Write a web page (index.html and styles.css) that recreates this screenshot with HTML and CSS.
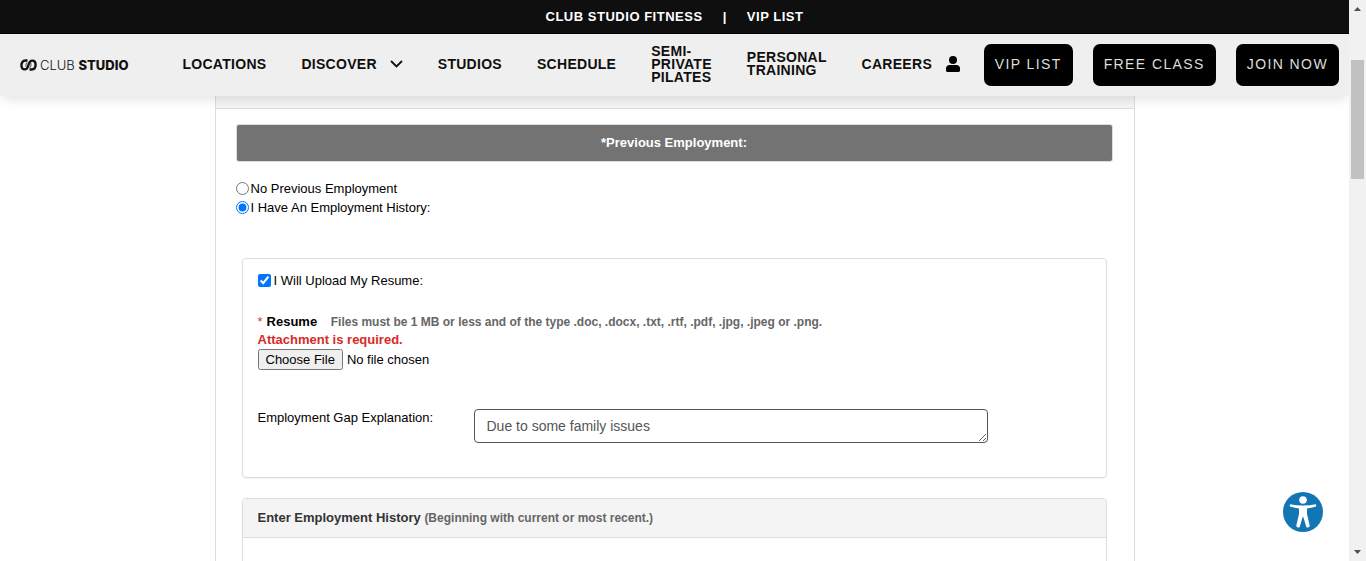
FILE: index.html
```html
<!DOCTYPE html>
<html lang="en">
<head>
<meta charset="utf-8">
<title>Club Studio - Careers</title>
<link rel="stylesheet" href="styles.css">
</head>
<body>
<div class="page">
  <div class="topbar">
    <a href="#">CLUB STUDIO FITNESS</a><span>|</span><a href="#">VIP LIST</a>
  </div>
  <header class="header">
    <a class="logo" href="#">
      <svg class="logo-mark" viewBox="0 0 34 24" fill="none" stroke="#111" stroke-width="4.800">
        <path d="M15 3H11C5.500 3 2.800 7.500 2.800 12.500C2.800 18 5.500 20.800 9.500 20.800C14 20.800 15.500 17.500 17 12S20 3.200 24.500 3.200C28.500 3.200 31.200 6 31.200 11.500C31.200 16.500 28.500 21 23 21H19"/>
        <path d="M12 15.500C11.500 12 12.500 8.500 14.500 6.500M22 8.500C22.500 12 21.500 15.500 19.500 17.500" stroke-width="1.600"/>
      </svg>
      <span class="logo-text">CLUB <b>STUDIO</b></span>
    </a>
    <nav class="nav">
      <a href="#">LOCATIONS</a>
      <a class="has-menu" href="#">DISCOVER
        <svg class="chevron" viewBox="0 0 13 8" fill="none" stroke="#111" stroke-width="1.800"><path d="M1 1L6.500 6.500L12 1"/></svg>
      </a>
      <a href="#">STUDIOS</a>
      <a href="#">SCHEDULE</a>
      <a class="stacked" href="#">SEMI-PRIVATE PILATES</a>
      <a class="stacked" href="#">PERSONAL TRAINING</a>
      <a href="#">CAREERS</a>
    </nav>
    <div class="actions">
      <a class="account" href="#" aria-label="Account">
        <svg viewBox="0 0 14 16" fill="#000"><circle cx="7" cy="4" r="4"/><path d="M3.600 9H10.400C12.600 9 14 10.500 14 12.500V14.600C14 15.500 13.500 16 12.600 16H1.400C.5 16 0 15.500 0 14.600V12.500C0 10.500 1.400 9 3.600 9Z"/></svg>
      </a>
      <a class="cta" href="#">VIP LIST</a>
      <a class="cta" href="#">FREE CLASS</a>
      <a class="cta" href="#">JOIN NOW</a>
    </div>
  </header>

  <main class="form-card">
    <div class="form-card-head"></div>
    <form class="form-body">
      <h2 class="band">*Previous Employment:</h2>
      <div class="choices">
        <label class="choice"><input type="radio" name="history">No Previous Employment</label>
        <label class="choice"><input type="radio" name="history" checked>I Have An Employment History:</label>
      </div>
      <section class="panel resume">
        <label class="choice upload"><input type="checkbox" checked>I Will Upload My Resume:</label>
        <div class="field-head">
          <span class="star">*</span><label class="field-name" for="resume">Resume</label>
          <span class="hint">Files must be 1 MB or less and of the type .doc, .docx, .txt, .rtf, .pdf, .jpg, .jpeg or .png.</span>
        </div>
        <div class="error">Attachment is required.</div>
        <input class="file" type="file" id="resume">
        <div class="gap-row">
          <label for="gap">Employment Gap Explanation:</label>
          <textarea id="gap" rows="1">Due to some family issues</textarea>
        </div>
      </section>
      <section class="panel history">
        <h3 class="panel-head">Enter Employment History <small>(Beginning with current or most recent.)</small></h3>
      </section>
    </form>
  </main>

  <button class="a11y" type="button" aria-label="Accessibility">
    <svg viewBox="0 0 40 40"><circle cx="20" cy="20" r="20" fill="#1276b5"/><circle cx="20" cy="8" r="3.800" fill="#fff"/>
      <path fill="#fff" d="M7.500 12.200Q13 13.600 20 13.600T32.500 12.200Q33.800 12.800 33 14.500Q28 16 24 16.500V22L26.800 34Q26 36 23.400 35.200L20.300 25H19.700L16.600 35.200Q14 36 13.200 34L16 22V16.500Q12 16 7 14.500Q6.200 12.800 7.500 12.200Z"/></svg>
  </button>
</div>
<div class="scrollbar" aria-hidden="true">
  <svg class="arrow" viewBox="0 0 7 4" fill="#505050"><path d="M0 4L3.500 0L7 4Z"/></svg>
  <div class="track"><div class="thumb"></div></div>
  <svg class="arrow" viewBox="0 0 7 4" fill="#505050"><path d="M0 0L3.500 4L7 0Z"/></svg>
</div>
</body>
</html>
```
FILE: styles.css
```css
* { box-sizing: border-box; }

body {
  margin: 0;
  display: flex;
  height: 100vh;
  overflow: hidden;
  background: #fff;
  color: #000;
  font: 13px/18px "Liberation Sans", Arial, sans-serif;
}

a { color: inherit; text-decoration: none; }

.page {
  flex: 1;
  min-width: 0;
  position: relative;
  overflow: hidden;
}

.topbar {
  display: flex;
  justify-content: center;
  gap: 20px;
  height: 34px;
  align-items: center;
  background: #0f0f0f;
  border-bottom: 1px solid #000;
  color: #fff;
  font-size: 13px;
  font-weight: 700;
  letter-spacing: 0.04em;
}

.header {
  position: relative;
  z-index: 1;
  display: flex;
  align-items: center;
  height: 62px;
  padding: 0 10px 0 20px;
  background: #efefef;
  box-shadow: 0 6px 10px -2px rgba(0, 0, 0, 0.1);
}

.logo {
  display: flex;
  align-items: center;
  gap: 3px;
  margin-right: 54px;
  color: #111;
}
.logo-mark { width: 17px; height: 12px; }
.logo-text {
  font-family: Inter, sans-serif;
  font-size: 13px;
  font-weight: 300;
  white-space: nowrap;
}
.logo-text b { font-weight: 800; }

.nav {
  display: flex;
  align-items: center;
  gap: 35px;
  padding-bottom: 2px;
  color: #0f0f0f;
  font-size: 14px;
  font-weight: 700;
  line-height: 13px;
  letter-spacing: 0.02em;
}
.has-menu { display: flex; align-items: center; gap: 13px; }
.chevron { width: 13px; height: 8px; }
.stacked { width: min-content; }

.actions {
  display: flex;
  align-items: center;
  gap: 20px;
  margin-left: auto;
}
.account { margin-right: 4px; padding-bottom: 3px; }
.account svg { display: block; width: 14px; height: 16px; }
.cta {
  padding: 10px 11px 12px;
  border-radius: 7px;
  background: #000;
  color: #ddd;
  font-size: 14px;
  font-weight: 400;
  line-height: 20px;
  letter-spacing: 0.1em;
  white-space: nowrap;
}

.form-card {
  max-width: 920px;
  margin: 0 auto;
  border: 1px solid #ddd;
  border-top: 0;
}
.form-card-head {
  height: 13px;
  background: #f4f4f4;
  border-bottom: 1px solid #ddd;
}
.form-body { padding: 15px 21px 0 20px; }

.band {
  margin: 0;
  padding: 9px;
  border: 1px solid #ddd;
  border-radius: 3px;
  background: #737373;
  color: #fff;
  font-size: 13px;
  line-height: 18px;
  text-align: center;
}

.choices { margin: 17px 0 41px; }
.choice { display: flex; align-items: center; line-height: 19px; }
.choice input { margin: 0 2px 0 0; width: 13px; height: 13px; }
.choice.upload input { margin-right: 3px; }

.panel {
  margin: 0 6px 20px;
  border: 1px solid #ddd;
  border-radius: 4px;
  box-shadow: 0 1px 1px rgba(0, 0, 0, 0.05);
}
.resume { padding: 12px 15px 34px; }

.field-head { margin-top: 23px; font-weight: 700; }
.star { margin-right: 4px; color: #dc3545; font-weight: 400; }
.hint { margin-left: 10px; color: #666; font-size: 12px; }
.error { color: #d62b26; font-weight: 700; }
.file { display: block; font: inherit; height: 21px; }

.gap-row {
  display: grid;
  grid-template-columns: 216px minmax(0, 514px);
  margin-top: 39px;
}
textarea {
  height: 34px;
  padding: 6px 12px;
  border: 1px solid #555;
  border-radius: 4px;
  color: #555;
  font: 14px/20px "Liberation Sans", Arial, sans-serif;
  overflow: hidden;
  resize: both;
}

.history { height: 200px; }
.panel-head {
  margin: 0;
  padding: 10px 15px;
  border-bottom: 1px solid #ddd;
  border-radius: 3px 3px 0 0;
  background: #f4f4f4;
  color: #333;
  font-size: 13px;
  line-height: 18px;
}
.panel-head small { color: #666; font-size: 12px; }

.a11y {
  position: absolute;
  right: 26px;
  bottom: 29px;
  width: 40px;
  height: 40px;
  padding: 0;
  border: 0;
  border-radius: 50%;
  background: none;
}
.a11y svg { display: block; }

.scrollbar {
  flex: 0 0 17px;
  display: flex;
  flex-direction: column;
  align-items: center;
  justify-content: space-between;
  padding: 7px 0;
  background: #f1f1f1;
}
.arrow { width: 7px; height: 4px; }
.track { flex: 1; padding-top: 49px; }
.thumb { width: 13px; height: 119px; background: #c1c1c1; }
```
